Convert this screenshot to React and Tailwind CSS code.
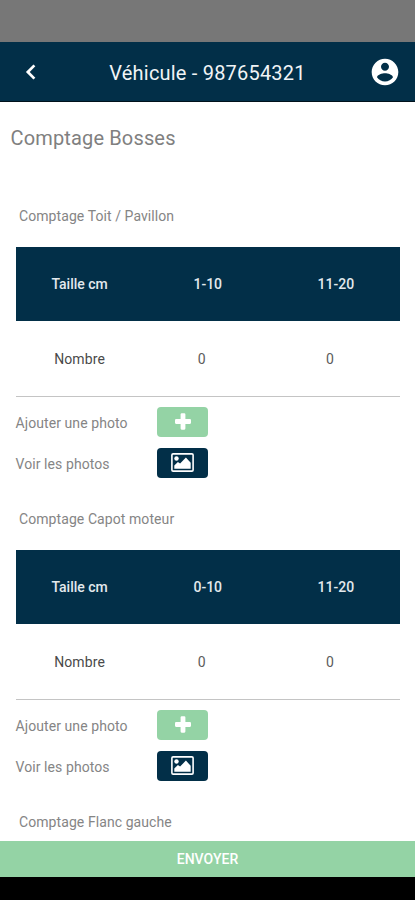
function BackIcon() {
  return (
    <svg className="h-[16px] w-[11px]" viewBox="0 0 11 16" fill="none" stroke="#fff" strokeWidth="2.7">
      <path d="M9.4 1.4 2.8 8l6.6 6.6" />
    </svg>
  );
}

function AccountIcon() {
  return (
    <svg className="h-[32px] w-[32px]" viewBox="0 0 24 24" fill="#fff">
      <path d="M12 2C6.48 2 2 6.48 2 12s4.48 10 10 10 10-4.48 10-10S17.52 2 12 2zm0 3c1.66 0 3 1.34 3 3s-1.34 3-3 3-3-1.34-3-3 1.34-3 3-3zm0 14.2c-2.5 0-4.71-1.28-6-3.22.03-1.99 4-3.08 6-3.08 1.99 0 5.97 1.09 6 3.08-1.29 1.94-3.5 3.22-6 3.22z" />
    </svg>
  );
}

function PlusIcon() {
  return (
    <svg className="h-[17px] w-[16px]" viewBox="0 0 16 17" fill="#fff">
      <rect x="5.6" y="0.3" width="4.8" height="16.4" rx="1.1" />
      <rect x="0" y="6.1" width="16" height="4.8" rx="1.1" />
    </svg>
  );
}

function PictureIcon() {
  return (
    <svg className="h-[19px] w-[23px]" viewBox="0 0 23 19">
      <rect x="0.9" y="0.9" width="21.2" height="17.2" rx="1.2" fill="none" stroke="#fff" strokeWidth="1.6" />
      <circle cx="5.5" cy="5.5" r="2.2" fill="#fff" />
      <path d="M3.3 15.8v-3.4l3.6-3.4 2.2 1.5 5.8-5.9 4.8 5.2v6z" fill="#fff" />
    </svg>
  );
}

function SectionTitle({ children }) {
  return <h2 className="h-[40px] pl-1 text-[14px] leading-[19px] tracking-[0.08px] text-[#858585]">{children}</h2>;
}

function PhotoRow({ label, className, children }) {
  return (
    <div className="flex h-[30px] items-center">
      <span className="w-[141.5px] pt-[3px] text-[14px] tracking-[0.08px] text-[#858585]">{label}</span>
      <button className={`flex h-[30px] w-[51px] items-center justify-center rounded-[4px] ${className}`}>
        {children}
      </button>
    </div>
  );
}

function Section({ title, sizes }) {
  return (
    <section className="h-[303px] shrink-0 px-[15px]">
      <SectionTitle>{title}</SectionTitle>
      <div className="ml-[0.5px] grid h-[74.5px] grid-cols-3 items-center bg-[#022f48] text-center text-[14px] font-medium text-[#e3e9ed]">
        <span className="pt-[2px]">Taille cm</span>
        {sizes.map((size) => (
          <span key={size} className="pt-[2px]">
            {size}
          </span>
        ))}
      </div>
      <div className="ml-[0.5px] grid h-[75.5px] grid-cols-3 items-center border-b border-[#c4c4c4] text-center text-[14px] text-[#4a4a4a]">
        <span className="pt-[3px] tracking-[0.1px]">Nombre</span>
        <span className="pt-[2px] pr-3 text-[#5c5c5c]">0</span>
        <span className="pt-[2px] pr-3 text-[#5c5c5c]">0</span>
      </div>
      <div className="flex flex-col gap-[11px] pt-[10px] pl-[0.5px]">
        <PhotoRow label="Ajouter une photo" className="bg-[#94d3a5]">
          <PlusIcon />
        </PhotoRow>
        <PhotoRow label="Voir les photos" className="bg-[#022f48]">
          <PictureIcon />
        </PhotoRow>
      </div>
    </section>
  );
}

export default function App() {
  return (
    <div className="flex h-[900px] w-[415px] flex-col overflow-hidden bg-white font-['Roboto',sans-serif]">
      <div className="h-[42px] shrink-0 bg-[#777777]" />
      <header className="grid h-[60px] shrink-0 grid-cols-[60px_1fr_60px] items-center border-b border-[#01121c] bg-[#022f48]">
        <button className="flex pt-px pl-[25px]">
          <BackIcon />
        </button>
        <h1 className="pt-[3px] text-center text-[20px] tracking-[0.2px] text-[#f1f4f6]">Véhicule - 987654321</h1>
        <button className="flex justify-end pt-px pr-[14px]">
          <AccountIcon />
        </button>
      </header>
      <main className="flex min-h-0 flex-1 flex-col overflow-hidden">
        <p className="h-[104.5px] shrink-0 pt-[22px] pl-[10.5px] text-[20px] leading-[28px] tracking-[0.15px] text-[#808080]">
          Comptage Bosses
        </p>
        <Section title="Comptage Toit / Pavillon" sizes={["1-10", "11-20"]} />
        <Section title="Comptage Capot moteur" sizes={["0-10", "11-20"]} />
        <section className="shrink-0 px-[15px]">
          <SectionTitle>Comptage Flanc gauche</SectionTitle>
        </section>
      </main>
      <button className="h-[36px] shrink-0 bg-[#94d3a5] pt-px text-[14px] font-medium text-white">ENVOYER</button>
      <div className="h-[23px] shrink-0 bg-black" />
    </div>
  );
}
